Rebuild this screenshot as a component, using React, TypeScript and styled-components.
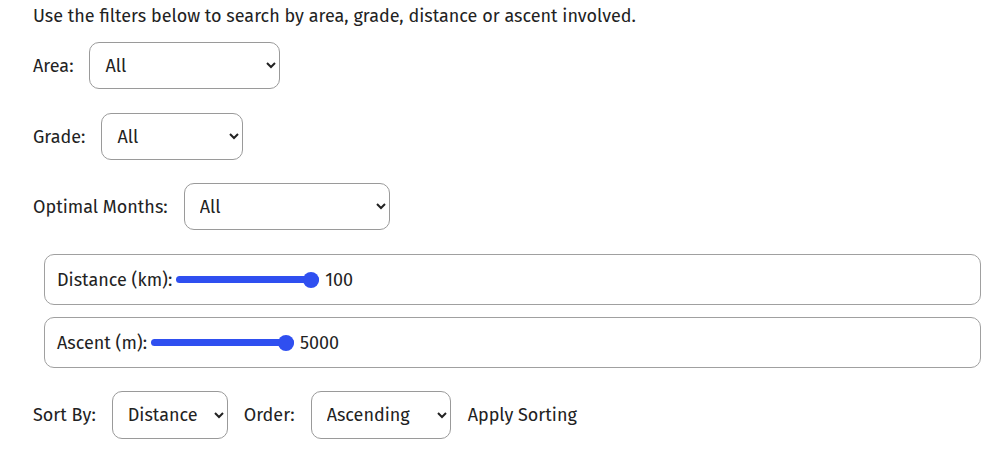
import React from "react";
import styled, { createGlobalStyle } from "styled-components";

const Global = createGlobalStyle`
  html, body { margin: 0; padding: 0; background: #fff; }
  body { font-family: "Fira Sans", "Open Sans", "Noto Sans", sans-serif; color: #222; }
`;

const Page = styled.div`
  padding: 5px 8px 0 33px;
  font-size: 18px;
`;

const Intro = styled.p`
  margin: 0 0 15px 0;
  line-height: 22px;
`;

const Row = styled.div<{ $mb?: number }>`
  display: flex;
  align-items: center;
  gap: 16px;
  margin-bottom: ${(p) => p.$mb ?? 24}px;
`;

const Label = styled.label`
  white-space: nowrap;
`;

const Select = styled.select<{ $w: number; $h?: number }>`
  width: ${(p) => p.$w}px;
  height: ${(p) => p.$h ?? 47}px;
  padding: 0 8px 0 11px;
  border: 1px solid #9a9a9a;
  border-radius: 10px;
  background: #fff;
  font: inherit;
  color: #222;
`;

const SliderBox = styled.div<{ $mb?: number }>`
  display: flex;
  align-items: center;
  height: 51px;
  box-sizing: border-box;
  margin: 0 11px ${(p) => p.$mb ?? 12}px 11px;
  padding: 0 12px;
  border: 1px solid #a0a0a0;
  border-radius: 10px;
`;

const Range = styled.input`
  -webkit-appearance: none;
  appearance: none;
  width: 143px;
  height: 7px;
  margin: 0 6px 0 4px;
  border-radius: 4px;
  background: #2f4ff0;
  outline: none;
  &::-webkit-slider-thumb {
    -webkit-appearance: none;
    appearance: none;
    width: 16px;
    height: 16px;
    border-radius: 50%;
    background: #2f4ff0;
    border: none;
  }
`;

const Value = styled.span``;

const Trailing = styled.span`
  margin-left: 1px;
  white-space: nowrap;
`;

export default function App() {
  return (
    <>
      <Global />
      <Page>
        <Intro>Use the filters below to search by area, grade, distance or ascent involved.</Intro>
        <Row>
          <Label>Area:</Label>
          <Select $w={191} defaultValue="All">
            <option>All</option>
          </Select>
        </Row>
        <Row $mb={23}>
          <Label>Grade:</Label>
          <Select $w={142} defaultValue="All">
            <option>All</option>
          </Select>
        </Row>
        <Row>
          <Label>Optimal Months:</Label>
          <Select $w={206} defaultValue="All">
            <option>All</option>
          </Select>
        </Row>
        <SliderBox>
          <Label>Distance (km):</Label>
          <Range type="range" min={0} max={100} defaultValue={100} />
          <Value>100</Value>
        </SliderBox>
        <SliderBox $mb={23}>
          <Label>Ascent (m):</Label>
          <Range type="range" min={0} max={5000} defaultValue={5000} />
          <Value>5000</Value>
        </SliderBox>
        <Row>
          <Label>Sort By:</Label>
          <Select $w={116} $h={48} defaultValue="Distance">
            <option>Distance</option>
          </Select>
          <Label>Order:</Label>
          <Select $w={140} $h={48} defaultValue="Ascending">
            <option>Ascending</option>
          </Select>
          <Trailing>Apply Sorting</Trailing>
        </Row>
      </Page>
    </>
  );
}
